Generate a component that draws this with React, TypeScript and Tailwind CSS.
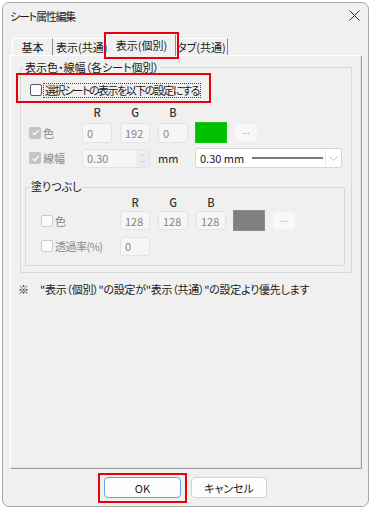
import React from "react";

// Windows dialog: シート属性編集, tab 表示(個別)

function CheckBox({ checked = false, disabled = false }: { checked?: boolean; disabled?: boolean }) {
  if (checked) {
    return (
      <span className="flex h-[12px] w-[12px] shrink-0 items-center justify-center rounded-[2px] bg-[#c4c4c4]">
        <svg width="9" height="9" viewBox="0 0 9 9">
          <path d="M1.5 4.6 L3.6 6.6 L7.6 2.2" fill="none" stroke="#fff" strokeWidth="1.3" />
        </svg>
      </span>
    );
  }
  return (
    <span
      className={`block h-[12px] w-[12px] shrink-0 rounded-[2px] border ${
        disabled ? "border-[#cbcbcb] bg-[#fbfbfb]" : "border-[#5a5a5a] bg-[#fdfdfd]"
      }`}
    />
  );
}

function NumBox({ value, w = "w-[30px]", h = "h-[20px]" }: { value: string; w?: string; h?: string }) {
  return (
    <div className={`flex ${w} ${h} items-center rounded-[3px] border border-[#e3e3e3] bg-[#f6f6f6] pl-[4px] text-[11px] text-[#858585]`}>
      {value}
    </div>
  );
}

function DotsButton() {
  return (
    <div className="flex h-[17px] w-[22px] items-center justify-center rounded-[3px] bg-[#f8f8f8] pb-[3px] text-[9px] text-[#a8a8a8]">
      ...
    </div>
  );
}

export default function App() {
  return (
    <div className="relative h-[510px] w-[372px] overflow-hidden bg-white pl-[2px] pt-[2px] font-['Noto_Sans_CJK_JP','Noto_Sans',sans-serif] text-[11px] leading-[14px] text-[#1a1a1a] [font-feature-settings:'palt']">
      <div className="flex h-[505px] w-[367px] flex-col rounded-[7px] border border-[#a9a9a9] bg-[#f0f0f0]">
        {/* title bar */}
        <div className="flex h-[25px] items-center justify-between pl-[7px] pr-[8px]">
          <span className="text-[11px] tracking-[-1.2px]">シート属性編集</span>
          <svg width="11" height="11" viewBox="0 0 11 11">
            <path d="M0.5 0.5 L10.5 10.5 M10.5 0.5 L0.5 10.5" stroke="#2a2a2a" strokeWidth="1" />
          </svg>
        </div>

        {/* tabs */}
        <div className="flex h-[27px] items-end pl-[9px]">
          <div className="flex h-[17px] w-[41px] items-center justify-center border-l border-t border-r border-l-white border-t-white border-r-[#8a8a8a]">
            基本
          </div>
          <div className="flex h-[17px] w-[56px] items-center overflow-hidden whitespace-nowrap border-t border-t-white pl-[3px]">
            表示(共通)
          </div>
          <div className="relative z-10 -mb-[1px] -ml-[2px] flex h-[22px] w-[69px] items-center justify-center border-l border-t border-r border-l-white border-t-white border-r-[#8a8a8a] bg-[#f0f0f0] pb-[1px]">
            表示(個別)
          </div>
          <div className="flex h-[17px] w-[52px] items-center whitespace-nowrap border-t border-r border-t-white border-r-[#8a8a8a] pl-[1px]">
            タブ(共通)
          </div>
        </div>

        {/* tab pane */}
        <div className="ml-[7px] h-[414px] w-[352px] border-b border-l border-r border-t border-b-[#a0a0a0] border-l-white border-r-[#a0a0a0] border-t-white shadow-[inset_-1px_-1px_0_#e2e2e2]">
          {/* 表示色・線幅 group */}
          <div className="relative ml-[9px] mt-[11px] h-[206px] w-[332px] rounded-[2px] border border-[#d8d8d8]">
            <span className="absolute -top-[8px] left-[3px] bg-[#f0f0f0] px-[1px]">表示色・線幅（各シート個別）</span>

            <div className="mt-[14px] flex h-[16px] items-center pl-[9px]">
              <CheckBox />
              <span className="ml-[1px] border border-dotted border-[#444] px-[1px] leading-[13px] tracking-[-1.5px]">
                選択シートの表示を以下の設定にする
              </span>
            </div>

            <div className="mt-[7px] flex h-[14px] gap-[8px] pl-[61px] text-[11px] font-medium text-[#333]">
              <span className="w-[30px] text-center">R</span>
              <span className="w-[30px] text-center">G</span>
              <span className="w-[30px] text-center">B</span>
            </div>

            <div className="mt-[3px] flex h-[21px] items-center pl-[8px]">
              <div className="flex w-[53px] items-center gap-[2px] text-[#8a8a8a]">
                <CheckBox checked disabled />
                <span>色</span>
              </div>
              <div className="flex gap-[8px]">
                <NumBox value="0" />
                <NumBox value="192" />
                <NumBox value="0" />
              </div>
              <div className="ml-[7px] h-[21px] w-[32px] border border-[#19c719] bg-[#00c000]" />
              <div className="ml-[8px]">
                <DotsButton />
              </div>
            </div>

            <div className="mt-[5px] flex h-[20px] items-center pl-[8px]">
              <div className="flex w-[53px] items-center gap-[2px] text-[#8a8a8a]">
                <CheckBox checked disabled />
                <span>線幅</span>
              </div>
              <div className="flex h-[19px] w-[68px] items-center rounded-[3px] border border-[#e3e3e3] bg-[#f6f6f6] text-[11px] text-[#858585]">
                <span className="flex-1 pl-[4px]">0.30</span>
                <div className="flex h-full w-[13px] flex-col items-center justify-center gap-[3px] bg-[#ebedf3]">
                  <svg width="5" height="3" viewBox="0 0 5 3">
                    <path d="M0.5 2.5 L2.5 0.5 L4.5 2.5" fill="none" stroke="#b5b5b5" strokeWidth="0.8" />
                  </svg>
                  <svg width="5" height="3" viewBox="0 0 5 3">
                    <path d="M0.5 0.5 L2.5 2.5 L4.5 0.5" fill="none" stroke="#b5b5b5" strokeWidth="0.8" />
                  </svg>
                </div>
              </div>
              <span className="ml-[8px] w-[37px] text-[11px]">mm</span>
              <div className="flex h-[20px] w-[147px] items-center rounded-[3px] border border-[#d6d6d6] bg-white">
                <span className="w-[56px] pl-[4px] text-[11px]">0.30 mm</span>
                <div className="h-[2px] w-[71px] bg-[#7a7a7a]" />
                <div className="ml-[2px] h-[16px] w-px bg-[#e6e6e6]" />
                <div className="flex flex-1 items-center justify-center">
                  <svg width="9" height="5" viewBox="0 0 9 5">
                    <path d="M0.5 0.5 L4.5 4.5 L8.5 0.5" fill="none" stroke="#bdbdbd" strokeWidth="1" />
                  </svg>
                </div>
              </div>
            </div>

            {/* 塗りつぶし group */}
            <div className="relative ml-[4px] mt-[19px] h-[79px] w-[320px] rounded-[2px] border border-[#d8d8d8]">
              <span className="absolute -top-[9px] left-[4px] bg-[#f0f0f0] px-[1px]">塗りつぶし</span>

              <div className="mt-[7px] flex h-[14px] gap-[8px] pl-[94px] text-[11px] font-medium text-[#333]">
                <span className="w-[30px] text-center">R</span>
                <span className="w-[30px] text-center">G</span>
                <span className="w-[30px] text-center">B</span>
              </div>

              <div className="mt-[1px] flex h-[21px] items-center pl-[15px]">
                <div className="flex w-[79px] items-center gap-[2px] text-[#8a8a8a]">
                  <CheckBox disabled />
                  <span>色</span>
                </div>
                <div className="flex gap-[8px]">
                  <NumBox value="128" h="h-[19px]" />
                  <NumBox value="128" h="h-[19px]" />
                  <NumBox value="128" h="h-[19px]" />
                </div>
                <div className="ml-[7px] h-[21px] w-[32px] border border-[#8d8d8d] bg-[#808080]" />
                <div className="ml-[8px]">
                  <DotsButton />
                </div>
              </div>

              <div className="mt-[5px] flex h-[20px] items-center pl-[15px]">
                <div className="flex w-[79px] items-center gap-[2px] text-[#8a8a8a]">
                  <CheckBox disabled />
                  <span className="tracking-[-0.5px]">透過率(%)</span>
                </div>
                <NumBox value="0" h="h-[19px]" />
              </div>
            </div>
          </div>

          <div className="ml-[7px] mt-[9px] flex h-[14px] items-center whitespace-nowrap">
            <span className="w-[22px]">※</span>
            <span className="tracking-[-0.25px]">"表示（個別）"の設定が"表示（共通）"の設定より優先します</span>
          </div>
        </div>

        {/* buttons */}
        <div className="mt-[8px] flex justify-center gap-[10px]">
          <div className="flex h-[21px] w-[77px] items-center justify-center rounded-[4px] border border-[#5fa3e0] bg-[#fdfdfd] text-[11px]">
            OK
          </div>
          <div className="flex h-[21px] w-[76px] items-center justify-center rounded-[4px] border border-[#d2d2d2] bg-[#fdfdfd] text-[11px]">
            キャンセル
          </div>
        </div>
      </div>

      {/* red annotation boxes */}
      <div className="pointer-events-none absolute left-[104px] top-[32px] h-[27px] w-[75px] border-2 border-[#e8000b]" />
      <div className="pointer-events-none absolute left-[16px] top-[73px] h-[30px] w-[195px] border-2 border-[#e8000b]" />
      <div className="pointer-events-none absolute left-[98px] top-[473px] h-[30px] w-[89px] border-2 border-[#e8000b]" />
    </div>
  );
}
